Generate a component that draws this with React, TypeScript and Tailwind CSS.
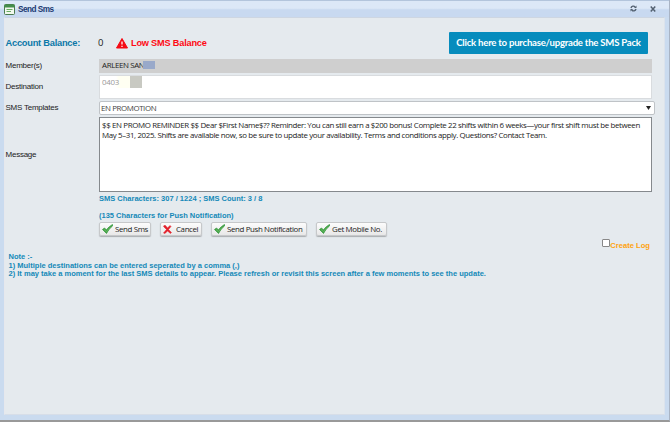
import type { ReactNode } from "react";

function Check() {
  return (
    <svg className="h-[10px] w-[11px] shrink-0" viewBox="0 0 22 20">
      <path d="M1 11 L5 8 L9 12 C12 7 16 4 21 1 L21 4 C16 8 13 12 9 19 Z" fill="#43a047" stroke="#3a9a40" strokeWidth="1.500" strokeLinejoin="round" />
      <path d="M4 11 L9 15 L16 7" fill="none" stroke="#6fc365" strokeWidth="1.500" />
    </svg>
  );
}

function Cross() {
  return (
    <svg className="h-[9px] w-[9px] shrink-0" viewBox="0 0 18 18">
      <path d="M2 1 L5 1 L9 6 L14 1 L16 3 L11 9 L17 15 L15 17 L9 12 L4 17 L1 16 L7 9 L1 3 Z" fill="#e3202b" stroke="#e3202b" />
    </svg>
  );
}

function ToolButton({ className, icon, children }: { className: string; icon: ReactNode; children: ReactNode }) {
  return (
    <button
      className={`flex h-[14px] items-center rounded-[2px] border border-[#c6c8ca] bg-linear-to-b from-[#fcfcfc] to-[#e8e8e8] font-['Open_Sans',sans-serif] text-[7.900px] leading-none tracking-[-0.360px] whitespace-nowrap text-[#222] shadow-[0_1px_1px_#a9adb0] ${className}`}
    >
      {icon}
      <span className="pt-px">{children}</span>
    </button>
  );
}

function Label({ children }: { children: ReactNode }) {
  return <div className="w-[93.500px] shrink-0 text-[8px] leading-[10px] tracking-[-0.240px] text-[#222]">{children}</div>;
}

export default function App() {
  return (
    <div className="flex h-[422px] w-[670px] flex-col overflow-hidden border-r border-b-2 border-r-[#a9b4c4] border-b-[#999] bg-[#cadbef] font-['Liberation_Sans',Arial,sans-serif]">
      <header className="flex h-[17px] shrink-0 items-center border-t border-[#b3c5dc] bg-linear-to-b from-[#dce8f7] from-45% to-[#c8d9f0] to-55% pr-[13px] pl-[4px]">
        <svg className="h-[11px] w-[11px]" viewBox="0 0 22 22">
          <rect x="1" y="1" width="20" height="20" rx="2" fill="#f2f8ee" stroke="#4b7b4f" strokeWidth="2" />
          <rect x="1" y="1" width="20" height="6" rx="1" fill="#448d4b" />
          <path d="M5 11 H17 M5 15 H14" stroke="#69ad62" strokeWidth="2" />
        </svg>
        <h1 className="mt-[2px] ml-[3px] text-[8.200px] leading-none font-bold tracking-[-0.520px] text-[#203a73]">Send Sms</h1>
        <svg className="mb-px ml-auto h-[7px] w-[7px]" viewBox="0 0 14 14" fill="none" stroke="#536171" strokeWidth="2.800">
          <path d="M2 6 C3 2 8 1 10 4 M12 8 C11 12 6 13 4 10" />
          <path d="M8 6 H13 V1 Z M6 8 H1 V13 Z" fill="#536171" stroke="none" />
        </svg>
        <svg className="mb-px ml-[13px] h-[6px] w-[6px]" viewBox="0 0 12 12" stroke="#536171" strokeWidth="3">
          <path d="M1.500 1 L10.500 11 M10.500 1 L1.500 11" />
        </svg>
      </header>

      <main className="mr-[4px] ml-[4px] h-[398px] shrink-0 border border-t-[#cdd6e2] border-r-[#dce3ec] border-b-[#d7dee8] border-l-[#e6e8ed] bg-[#e5eaee] pl-[0.500px]">
        <div className="flex h-[41px] items-start pt-[14px]">
          <div className="mt-[5px] w-[92.500px] shrink-0 text-[9.300px] leading-[12px] font-bold tracking-[-0.250px] whitespace-nowrap text-[#0b78a8]">Account Balance:</div>
          <div className="mt-[5px] w-[18px] font-['Open_Sans',sans-serif] text-[9.500px] leading-[12px] text-[#222]">0</div>
          <svg className="mt-[6px] h-[11px] w-[12px]" viewBox="0 0 24 22">
            <path d="M12 1 L23 20 H1 Z" fill="#f50a14" stroke="#f50a14" strokeWidth="2" strokeLinejoin="round" />
            <path d="M12 7 V13 M12 15.500 V18" stroke="#fff" strokeWidth="2.500" />
          </svg>
          <div className="mt-[5px] ml-[3px] text-[9.200px] leading-[12px] font-bold tracking-[-0.200px] whitespace-nowrap text-[#ff0a14]">Low SMS Balance</div>
          <button className="mr-[16px] ml-auto flex h-[22px] w-[199px] shrink-0 items-center justify-center rounded-[1px] bg-[#068cbd] pt-px font-[Lato,sans-serif] text-[9.600px] font-bold tracking-[-0.240px] whitespace-nowrap text-white">
            Click here to purchase/upgrade the SMS Pack
          </button>
        </div>

        <div className="flex h-[14px] items-center">
          <Label>Member(s)</Label>
          <div className="flex h-[14px] w-[553px] items-center bg-[#cfcfcf] pl-[3px] font-['Open_Sans',sans-serif] text-[7.900px] tracking-[-0.360px] text-[#222]">
            <span className="w-[41px] whitespace-nowrap">ARLEEN SAN</span>
            <span className="relative mb-[2px] h-[8px] w-[12px] bg-[#99a9ca]" />
          </div>
        </div>

        <div className="mt-[2px] flex h-[24px] items-center">
          <Label>Destination</Label>
          <div className="flex h-[24px] w-[553px] items-start border border-[#d9dcdf] bg-white pl-[2px] font-['Open_Sans',sans-serif] text-[7.900px] leading-[12px] tracking-[-0.300px] text-[#999]">
            <span className="h-[12px] w-[28px] bg-linear-to-r from-white from-50% to-[#fffff2] to-60%">0403</span>
            <span className="h-[12px] w-[12px] bg-[#c8c9c2]" />
          </div>
        </div>

        <div className="mt-[2px] flex h-[14px] items-center">
          <Label>SMS Templates</Label>
          <div className="flex h-[14px] w-[556px] items-center rounded-[2px] border border-[#bfc3c7] bg-white pt-px pr-[3px] pl-px font-['Open_Sans',sans-serif] text-[7.900px] leading-none tracking-[-0.400px] text-[#444]">
            EN PROMOTION
            <svg className="mb-px ml-auto h-[4px] w-[5px]" viewBox="0 0 10 8">
              <path d="M0 0 H10 L5 8 Z" fill="#222" />
            </svg>
          </div>
        </div>

        <div className="mt-[2px] flex h-[75px] items-center">
          <Label>Message</Label>
          <div className="h-[75px] w-[553px] border border-[#85898d] bg-white pt-[2px] pl-[2px] font-['Open_Sans',sans-serif] text-[7.900px] leading-[10px] tracking-[-0.360px] whitespace-nowrap text-[#222]">
            <p>$$ EN PROMO REMINDER $$ Dear $First Name$?? Reminder: You can still earn a $200 bonus! Complete 22 shifts within 6 weeks—your first shift must be between</p>
            <p>May 5–31, 2025. Shifts are available now, so be sure to update your availability. Terms and conditions apply. Questions? Contact Team.</p>
          </div>
        </div>

        <div className="ml-[93.500px] text-[7.500px] font-bold whitespace-nowrap text-[#1489b8]">
          <p className="mt-[2px] h-[10px] leading-[10px]">SMS Characters: 307 / 1224 ; SMS Count: 3 / 8</p>
          <p className="mt-[7px] h-[10px] leading-[10px]">(135 Characters for Push Notification)</p>
        </div>

        <div className="mt-px ml-[93.500px] flex">
          <ToolButton className="w-[52px] gap-[2px] pl-[2px]" icon={<Check />}>Send Sms</ToolButton>
          <ToolButton className="ml-[9px] w-[42px] gap-[4px] pl-[2px]" icon={<Cross />}>Cancel</ToolButton>
          <ToolButton className="ml-[9px] w-[96px] gap-[2px] pl-[2px]" icon={<Check />}>Send Push Notification</ToolButton>
          <ToolButton className="ml-[9px] w-[71px] gap-[2px] pl-[2px]" icon={<Check />}>Get Mobile No.</ToolButton>
        </div>

        <label className="mt-[3px] mr-[14px] flex h-[11px] items-start justify-end text-[7.600px] leading-[13px] font-bold whitespace-nowrap text-[#ffa20e]">
          <input type="checkbox" className="h-[8px] w-[8px] appearance-none rounded-[1px] border border-[#888] bg-white" />
          Create Log
        </label>

        <div className="mt-[3px] ml-[3px] text-[7.530px] leading-[8.600px] font-bold whitespace-nowrap text-[#1489b8]">
          <p>Note :-</p>
          <p>1) Multiple destinations can be entered seperated by a comma (,)</p>
          <p>2) It may take a moment for the last SMS details to appear. Please refresh or revisit this screen after a few moments to see the update.</p>
        </div>
      </main>
    </div>
  );
}
